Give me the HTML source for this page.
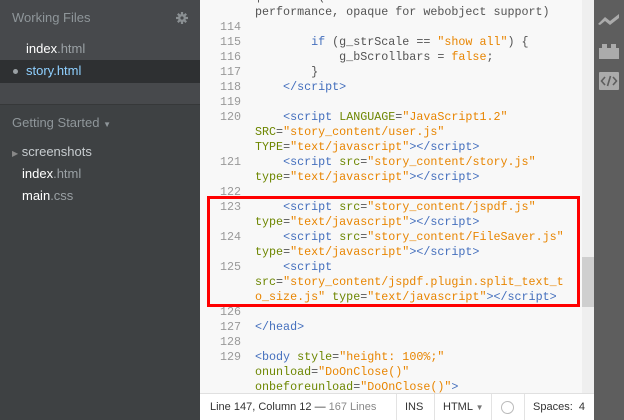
<!DOCTYPE html>
<html><head><style>
*{margin:0;padding:0;box-sizing:border-box}
html,body{width:624px;height:420px;overflow:hidden}
body{position:relative;font-family:"Liberation Sans",sans-serif;background:#f8f8f8}
#side{position:absolute;left:0;top:0;width:200px;height:420px;background:#3e4143}
#wf{position:absolute;left:0;top:0;width:200px;height:105px;background:#47494c;border-bottom:1px solid #363839}
.t{position:absolute;font-size:13px;white-space:nowrap}
#ed{position:absolute;left:200px;top:0;width:382px;height:393px;background:#f8f8f8;overflow:hidden}
.row{position:absolute;left:0;height:15px;line-height:15px;font-family:"Liberation Mono",monospace;font-size:11.7px;white-space:pre;color:#535353}
.ln{position:absolute;left:10px;width:31px;text-align:right;color:#999}
.c{position:absolute;left:55px}
.g{color:#446fbd}.a{color:#6d8600}.s{color:#e88501}
#sb{position:absolute;left:582px;top:0;width:12px;height:393px;background:#efefef}
#tb{position:absolute;left:594px;top:0;width:30px;height:420px;background:#5e5e5e}
#st{position:absolute;left:200px;top:393px;width:394px;height:27px;background:#fff;border-top:1px solid #e0e0e0;font-size:11px;color:#333;overflow:hidden}
#st div{position:absolute;top:0;height:26px;line-height:26px;border-left:1px solid #e3e3e3;padding:0 8px;white-space:nowrap}
</style></head><body>
<div id="side">
<div id="wf"></div>
<div class="t" style="left:12px;top:10px;color:#8f969a">Working Files</div>
<svg style="position:absolute;left:176px;top:12px" width="12" height="12" viewBox="0 0 12 12"><circle cx="6" cy="6" r="4" fill="#8a8f92"/><g stroke="#8a8f92" stroke-width="2.2"><line x1="6" y1="0" x2="6" y2="12"/><line x1="0" y1="6" x2="12" y2="6"/><line x1="1.8" y1="1.8" x2="10.2" y2="10.2"/><line x1="10.2" y1="1.8" x2="1.8" y2="10.2"/></g><circle cx="6" cy="6" r="1.6" fill="#47494c"/></svg>
<div class="t" style="left:26px;top:41px;color:#fff">index<span style="color:#9aa0a4">.html</span></div>
<div style="position:absolute;left:0;top:60px;width:200px;height:23px;background:#2e3032"></div>
<div style="position:absolute;left:13px;top:69px;width:5px;height:5px;border-radius:50%;background:#9aa0a4"></div>
<div class="t" style="left:26px;top:63px;color:#8fd0ff">story.html</div>
<div style="position:absolute;left:200px;top:63px;width:0;height:0;border-top:9px solid transparent;border-bottom:9px solid transparent;border-left:9px solid #2e3032"></div>
<div class="t" style="left:12px;top:115px;color:#8f969a">Getting Started <span style="font-size:8px">▼</span></div>
<div class="t" style="left:12px;top:144px;color:#c8cdd0"><span style="font-size:8px;color:#888">▶</span> screenshots</div>
<div class="t" style="left:22px;top:166px;color:#fff">index<span style="color:#9aa0a4">.html</span></div>
<div class="t" style="left:22px;top:188px;color:#fff">main<span style="color:#9aa0a4">.css</span></div>
</div>
<div id="ed">
<div class="row" style="top:-10px"><span class="c">| WINDOW (USE "WINDOW" FOR OPTIMAL</span></div>
<div class="row" style="top:5px"><span class="c">performance, opaque for webobject support)</span></div>
<div class="row" style="top:20px"><span class="ln">114</span></div>
<div class="row" style="top:35px"><span class="ln">115</span><span class="c">        <span class="g">if</span> (g_strScale == <span class="s">"show all"</span>) {</span></div>
<div class="row" style="top:50px"><span class="ln">116</span><span class="c">            g_bScrollbars = <span class="s">false</span>;</span></div>
<div class="row" style="top:65px"><span class="ln">117</span><span class="c">        }</span></div>
<div class="row" style="top:80px"><span class="ln">118</span><span class="c g">    &lt;/script&gt;</span></div>
<div class="row" style="top:95px"><span class="ln">119</span></div>
<div class="row" style="top:110px"><span class="ln">120</span><span class="c">    <span class="g">&lt;script</span> <span class="a">LANGUAGE</span>=<span class="s">"JavaScript1.2"</span></span></div>
<div class="row" style="top:125px"><span class="c"><span class="a">SRC</span>=<span class="s">"story_content/user.js"</span></span></div>
<div class="row" style="top:140px"><span class="c"><span class="a">TYPE</span>=<span class="s">"text/javascript"</span><span class="g">&gt;&lt;/script&gt;</span></span></div>
<div class="row" style="top:155px"><span class="ln">121</span><span class="c">    <span class="g">&lt;script</span> <span class="a">src</span>=<span class="s">"story_content/story.js"</span></span></div>
<div class="row" style="top:170px"><span class="c"><span class="a">type</span>=<span class="s">"text/javascript"</span><span class="g">&gt;&lt;/script&gt;</span></span></div>
<div class="row" style="top:185px"><span class="ln">122</span></div>
<div class="row" style="top:200px"><span class="ln">123</span><span class="c">    <span class="g">&lt;script</span> <span class="a">src</span>=<span class="s">"story_content/jspdf.js"</span></span></div>
<div class="row" style="top:215px"><span class="c"><span class="a">type</span>=<span class="s">"text/javascript"</span><span class="g">&gt;&lt;/script&gt;</span></span></div>
<div class="row" style="top:230px"><span class="ln">124</span><span class="c">    <span class="g">&lt;script</span> <span class="a">src</span>=<span class="s">"story_content/FileSaver.js"</span></span></div>
<div class="row" style="top:245px"><span class="c"><span class="a">type</span>=<span class="s">"text/javascript"</span><span class="g">&gt;&lt;/script&gt;</span></span></div>
<div class="row" style="top:260px"><span class="ln">125</span><span class="c">    <span class="g">&lt;script</span></span></div>
<div class="row" style="top:275px"><span class="c"><span class="a">src</span>=<span class="s">"story_content/jspdf.plugin.split_text_t</span></span></div>
<div class="row" style="top:290px"><span class="c"><span class="s">o_size.js"</span> <span class="a">type</span>=<span class="s">"text/javascript"</span><span class="g">&gt;&lt;/script&gt;</span></span></div>
<div class="row" style="top:305px"><span class="ln">126</span></div>
<div class="row" style="top:320px"><span class="ln">127</span><span class="c g">&lt;/head&gt;</span></div>
<div class="row" style="top:335px"><span class="ln">128</span></div>
<div class="row" style="top:350px"><span class="ln">129</span><span class="c"><span class="g">&lt;body</span> <span class="a">style</span>=<span class="s">"height: 100%;"</span></span></div>
<div class="row" style="top:365px"><span class="c"><span class="a">onunload</span>=<span class="s">"DoOnClose()"</span></span></div>
<div class="row" style="top:380px"><span class="c"><span class="a">onbeforeunload</span>=<span class="s">"DoOnClose()"</span><span class="g">&gt;</span></span></div>
<div style="position:absolute;left:7px;top:196px;width:373px;height:111px;border:3px solid #f00"></div>
</div>
<div id="sb"><div style="position:absolute;left:0;top:257px;width:12px;height:50px;background:#cfcfcf"></div></div>
<div id="tb">
<svg style="position:absolute;left:3px;top:12px" width="24" height="14" viewBox="0 0 24 14"><path d="M1 12 L8 5 L13 9 L22 2 L22 6 L13 13 L8 9 L3 13 Z" fill="#ababab"/></svg>
<svg style="position:absolute;left:5px;top:43px" width="20" height="16" viewBox="0 0 20 16"><path d="M0 5 H3 V1 H8 V5 H12 V1 H17 V5 H20 V16 H0 Z" fill="#ababab"/></svg>
<svg style="position:absolute;left:5px;top:72px" width="20" height="18" viewBox="0 0 20 18"><rect width="20" height="18" rx="1" fill="#ababab"/><path d="M6 5 L2.5 9 L6 13 M14 5 L17.5 9 L14 13 M11.5 4 L8.5 14" stroke="#5e5e5e" stroke-width="1.6" fill="none"/></svg>
</div>
<div id="st">
<span style="position:absolute;left:10px;top:7px;white-space:nowrap">Line 147, Column 12 — <span style="color:#888">167 Lines</span></span>
<div style="left:196px;width:38px">INS</div>
<div style="left:234px;width:57px">HTML <span style="font-size:8px;color:#777">▼</span></div>
<div style="left:291px;width:33px"><span style="display:inline-block;width:13px;height:13px;border:1px solid #bbb;border-radius:50%;vertical-align:middle;margin-left:1px"></span></div>
<div style="left:324px;width:70px">Spaces:&nbsp; 4</div>
</div>
</body></html>
